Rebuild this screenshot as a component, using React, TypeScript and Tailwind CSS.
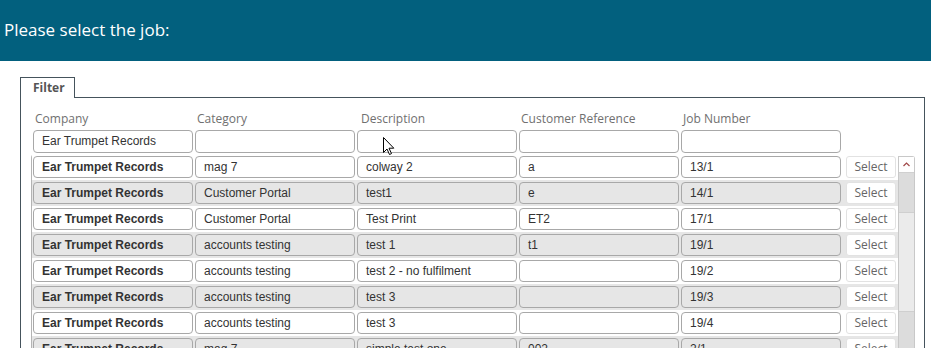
import React from "react";

type Row = { company: string; category: string; desc: string; ref: string; job: string };

const rows: Row[] = [
  { company: "Ear Trumpet Records", category: "mag 7", desc: "colway 2", ref: "a", job: "13/1" },
  { company: "Ear Trumpet Records", category: "Customer Portal", desc: "test1", ref: "e", job: "14/1" },
  { company: "Ear Trumpet Records", category: "Customer Portal", desc: "Test Print", ref: "ET2", job: "17/1" },
  { company: "Ear Trumpet Records", category: "accounts testing", desc: "test 1", ref: "t1", job: "19/1" },
  { company: "Ear Trumpet Records", category: "accounts testing", desc: "test 2 - no fulfilment", ref: "", job: "19/2" },
  { company: "Ear Trumpet Records", category: "accounts testing", desc: "test 3", ref: "", job: "19/3" },
  { company: "Ear Trumpet Records", category: "accounts testing", desc: "test 3", ref: "", job: "19/4" },
  { company: "Ear Trumpet Records", category: "mag 7", desc: "simple test one", ref: "002", job: "2/1" },
];

const ui = { fontFamily: '"Open Sans", "DejaVu Sans", sans-serif' };
const arial = { fontFamily: '"Liberation Sans", Arial, sans-serif' };

function Cell({ text, bold, gray }: { text: string; bold?: boolean; gray?: boolean }) {
  return (
    <div
      style={arial}
      className={
        "h-[22px] w-[160px] shrink-0 overflow-hidden whitespace-nowrap rounded-[4px] border border-[#a8a8a8] pl-2 text-[12px] leading-[20px] text-[#333] " +
        (gray ? "bg-[#e6e6e6] " : "bg-white ") +
        (bold ? "font-bold" : "font-normal")
      }
    >
      {text}
    </div>
  );
}

export default function App() {
  const labels = ["Company", "Category", "Description", "Customer Reference", "Job Number"];
  const filters = ["Ear Trumpet Records", "", "", "", ""];
  return (
    <div className="relative h-[348px] w-[931px] overflow-hidden bg-white">
      <div className="flex h-[61px] items-center bg-[#02607e] pb-[2px] pl-[4px]">
        <span style={ui} className="text-[17px] text-white">
          Please select the job:
        </span>
      </div>

      <div className="ml-[20px] mt-[16px] w-[905px]">
        <div className="flex">
          <div
            style={ui}
            className="flex h-[21px] w-[55px] items-center border-l border-r border-t border-[#45535c] pl-[12px] text-[12px] font-bold text-[#555]"
          >
            Filter
          </div>
          <div className="h-[21px] flex-1 border-b border-[#45535c]" />
        </div>

        <div className="h-[260px] border-l border-r border-[#45535c] pl-[12px] pt-[11px]">
          <div className="flex h-[20px] gap-[2px]">
            {labels.map((l, i) => (
              <div
                key={l}
                style={ui}
                className={
                  "w-[160px] text-[12px] leading-[20px] text-[#707070] " + (i === 2 ? "pl-[4px]" : "pl-[2px]")
                }
              >
                {l}
              </div>
            ))}
          </div>
          <div className="mt-[1px] flex gap-[2px]">
            {filters.map((f, i) => (
              <div
                key={i}
                style={arial}
                className="h-[23px] w-[160px] rounded-[4px] border border-[#a8a8a8] bg-white pl-2 text-[12px] leading-[21px] text-[#333]"
              >
                {f}
              </div>
            ))}
          </div>

          <div className="relative ml-[-2px] mt-[1px] flex w-[884px] rounded-tl-[4px] border-l border-[#b4b4b4]">
            <div className="w-[866px]">
              {rows.map((r, i) => {
                const gray = i % 2 === 1;
                return (
                  <div
                    key={i}
                    className={"flex h-[26px] items-center pl-[1px] " + (gray ? "bg-[#e6e6e6]" : "bg-white")}
                  >
                    <div className="flex gap-[2px]">
                      <Cell text={r.company} bold gray={gray} />
                      <Cell text={r.category} gray={gray} />
                      <Cell text={r.desc} gray={gray} />
                      <Cell text={r.ref} gray={gray} />
                      <Cell text={r.job} gray={gray} />
                    </div>
                    <div
                      style={ui}
                      className="ml-[5px] flex h-[22px] w-[50px] items-center justify-center rounded-[3px] border border-[#e2e2e2] bg-white text-[12px] text-[#666]"
                    >
                      Select
                    </div>
                  </div>
                );
              })}
            </div>
            <div className="mt-[2px] flex w-[17px] flex-col rounded-tr-[3px] border border-b-0 border-[#c8c8c8] bg-[#dcdcdc]">
              <div className="flex h-[16px] items-center justify-center border-b border-[#d0d0d0] bg-white">
                <svg width="7" height="5" viewBox="0 0 7 5">
                  <path d="M0.5 4 L3.5 1 L6.5 4" fill="none" stroke="#a04848" strokeWidth="1.2" />
                </svg>
              </div>
              <div className="h-[39px]" />
              <div className="h-[100px] border-y border-[#cfcfcf] bg-[#ebebeb]" />
              <div className="flex-1" />
            </div>
          </div>
        </div>
      </div>

      <svg
        className="pointer-events-none absolute left-[383px] top-[137px]"
        width="12"
        height="19"
        viewBox="0 0 12 19"
      >
        <path
          d="M0.5 0.5 L0.5 15.5 L4 12 L6.5 17.5 L8.5 16.6 L6 11.2 L10.8 11.2 Z"
          fill="white"
          stroke="black"
          strokeWidth="1"
          strokeLinejoin="round"
        />
      </svg>
    </div>
  );
}
